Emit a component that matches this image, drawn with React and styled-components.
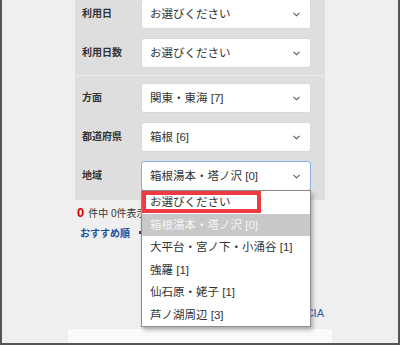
import React from "react";
import styled, { createGlobalStyle } from "styled-components";

const Global = createGlobalStyle`
  html, body { margin: 0; padding: 0; background: #efefef; }
`;

const Frame = styled.div`
  position: relative;
  width: 400px;
  height: 345px;
  box-sizing: border-box;
  border: 2px solid #555;
  border-top: none;
  background: #efefef;
  overflow: hidden;
  font-family: "Liberation Sans", "Noto Sans CJK JP", sans-serif;
  color: #333;
`;

const Column = styled.div`
  display: flex;
  flex-direction: column;
  width: 264px;
  margin-left: 66px;
`;

const Panel = styled.div`
  margin: -8px 7px 0;
  background: #dedede;
`;

const Group = styled.div`
  display: flex;
  flex-direction: column;
  gap: 9px;
  padding: ${(p) => p.$top}px 14px ${(p) => p.$bottom}px 7px;
  & + & {
    border-top: 1px solid #ebebeb;
  }
`;

const Row = styled.div`
  display: grid;
  grid-template-columns: 59px 170px;
  align-items: center;
  height: 30px;
`;

const Label = styled.div`
  font-size: 10px;
  font-weight: bold;
  color: #333;
  line-height: 14px;
`;

const Field = styled.div`
  position: relative;
  display: flex;
  align-items: center;
  justify-content: space-between;
  height: 30px;
  box-sizing: border-box;
  padding: 0 10px 0 8px;
  background: #fff;
  border: 1px solid ${(p) => (p.$focused ? "#86aee6" : "#d8d8d8")};
  border-radius: 3px;
  font-size: 11.5px;
  line-height: 16px;
  color: #333;
  white-space: nowrap;
`;

const Chevron = () => (
  <svg width="7" height="5" viewBox="0 0 7 5">
    <polyline points="0.5,0.8 3.5,3.8 6.5,0.8" fill="none" stroke="#555" strokeWidth="1.1" />
  </svg>
);

const List = styled.div`
  position: absolute;
  top: 100%;
  left: -1px;
  z-index: 5;
  width: 170px;
  box-sizing: border-box;
  border: 1px solid #8c8c8c;
  background: #fff;
  box-shadow: 2px 3px 4px rgba(0, 0, 0, 0.28);
`;

const Option = styled.div`
  height: 22.5px;
  line-height: 22.5px;
  padding-left: 8px;
  font-size: 11.5px;
  white-space: nowrap;
  color: ${(p) => (p.$active ? "#f4f4f4" : "#333")};
  background: ${(p) => (p.$active ? "#c8c8c8" : "#fff")};
`;

const Marker = styled.div`
  position: absolute;
  left: 0;
  top: 0;
  width: 119px;
  height: 22px;
  box-sizing: border-box;
  border: 4px solid #ee3a43;
`;

const Results = styled.div`
  display: flex;
  align-items: center;
  height: 16px;
  margin-top: 4px;
  padding-left: 9px;
  font-size: 10px;
  white-space: nowrap;
`;

const Count = styled.span`
  font-size: 13px;
  font-weight: bold;
  color: #d40000;
  margin-right: 4px;
`;

const Sort = styled.div`
  display: flex;
  align-items: center;
  height: 16px;
  margin-top: 4px;
  padding-left: 12px;
  font-size: 10px;
  font-weight: bold;
  color: #1d4fa0;
  white-space: nowrap;
`;

const Dot = styled.span`
  width: 2px;
  height: 3px;
  margin-left: 9px;
  background: #444;
`;

const Credit = styled.div`
  height: 14px;
  margin-top: 66px;
  padding-right: 8px;
  text-align: right;
  font-size: 11px;
  line-height: 14px;
  color: #2a60b0;
`;

const Footer = styled.div`
  height: 20px;
  margin-top: 9px;
  background: #fafafa;
`;

const areas = [
  "お選びください",
  "箱根湯本・塔ノ沢 [0]",
  "大平台・宮ノ下・小涌谷 [1]",
  "強羅 [1]",
  "仙石原・姥子 [1]",
  "芦ノ湖周辺 [3]",
];

function Select({ value, focused, children }) {
  return (
    <Field $focused={focused}>
      <span>{value}</span>
      <Chevron />
      {children}
    </Field>
  );
}

export default function App() {
  return (
    <Frame>
      <Global />
      <Column>
        <Panel>
          <Group $top={7} $bottom={7}>
            <Row>
              <Label>利用日</Label>
              <Select value="お選びください" />
            </Row>
            <Row>
              <Label>利用日数</Label>
              <Select value="お選びください" />
            </Row>
          </Group>
          <Group $top={7} $bottom={9}>
            <Row>
              <Label>方面</Label>
              <Select value="関東・東海 [7]" />
            </Row>
            <Row>
              <Label>都道府県</Label>
              <Select value="箱根 [6]" />
            </Row>
            <Row>
              <Label>地域</Label>
              <Select value="箱根湯本・塔ノ沢 [0]" focused>
                <List>
                  {areas.map((a, i) => (
                    <Option key={a} $active={i === 1}>
                      {a}
                    </Option>
                  ))}
                  <Marker />
                </List>
              </Select>
            </Row>
          </Group>
        </Panel>
        <Results>
          <Count>0</Count>
          件中&nbsp;0件表示
        </Results>
        <Sort>
          おすすめ順
          <Dot />
        </Sort>
        <Credit>CIA</Credit>
        <Footer />
      </Column>
    </Frame>
  );
}
